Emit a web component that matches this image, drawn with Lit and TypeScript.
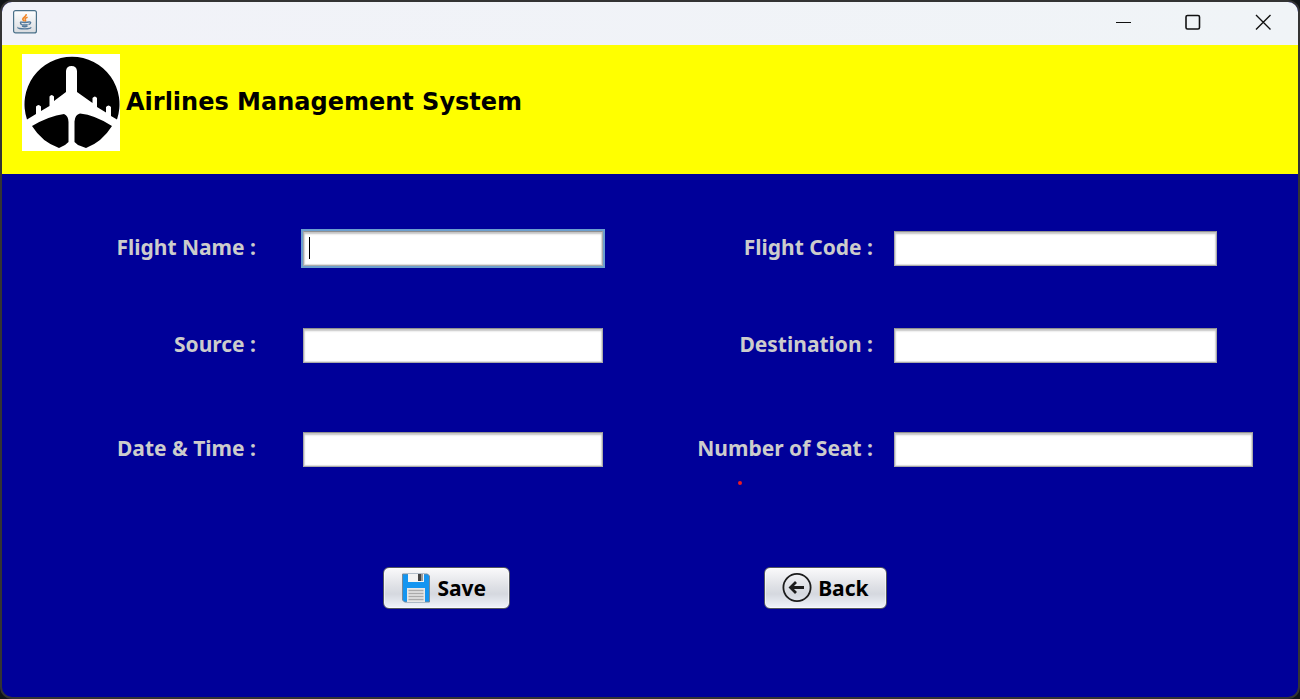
import { LitElement, html, css, svg } from "lit";
import { customElement } from "lit/decorators.js";

const fields = [
  { id: "flight-name", label: "Flight Name :", focused: true },
  { id: "flight-code", label: "Flight Code :", medium: true },
  { id: "source", label: "Source :" },
  { id: "destination", label: "Destination :", medium: true },
  { id: "date-time", label: "Date & Time :" },
  { id: "seats", label: "Number of Seat :", marked: true },
];

const javaIcon = svg`
  <svg width="24" height="24" viewBox="0 0 24 24" fill="none" aria-hidden="true">
    <defs><linearGradient id="tile" x1="0" y1="0" x2="0" y2="1">
      <stop offset="0" stop-color="#fff"/><stop offset="1" stop-color="#d8dbdf"/>
    </linearGradient></defs>
    <rect x=".6" y=".6" width="22.8" height="22.3" rx="2" fill="url(#tile)" stroke="#4b7189" stroke-width="1.2"/>
    <path d="M13.2 4.2c.5 2.3-3.8 3.300-3.400 5.100.2 1 1.400 1.500 1.400 2.200M14.600 7.200c-1.600.5-2.700 1.200-2.400 2.100.3.8.8 1.100 0 2.200" stroke="#f08424" stroke-width="1.600"/>
    <path d="M7.200 11.800c1 .9 7.300.8 8.800.1M7.400 12.300c0 1.300.4 2 1.300 2.300 1.800.4 4.400.4 6 0M16 12c2.200-.6 2.400 1.800-.5 2.500M9 16.200c1.400.5 4 .5 5.500 0M5.300 17.400c-1.400.9 2.500 1.500 6.500 1.500 4 0 6.800-.8 5.700-1.700" stroke="#53789a" stroke-width="1.400"/>
  </svg>`;

const planeLogo = svg`
  <svg width="98" height="97" viewBox="0 0 98 97" role="img" aria-label="Airplane">
    <rect width="98" height="97" fill="#fff"/>
    <path d="M5 65.500A47.500 47.500 0 1 1 95 65.500L89 62V53q-2.500-3-5 0v5.500L75 53v-9q-2-3-4.500 0v5L55 38V17q-.5-5-5.500-5T44 17v21L32 47v-4.500q-2.500-3-4.500 0V52L19 57v-4.500q-2.500-3-5 0V60z" fill="#000"/>
    <path d="M10 72Q27 62 42 60q4.500 2 4.500 8v20L43 91l-6 3Q20 88 10 72zM90 72Q73 61 58 59.500q-5 1-5.500 8V88l3.500 3 8 3Q80 88 90 72z" fill="#000"/>
  </svg>`;

const saveIcon = svg`
  <svg width="30" height="30" viewBox="0 0 30 30" aria-hidden="true">
    <path d="M1.500 1h25l2 2v26H3.500l-2-2z" fill="#1495f0" stroke="#73899c" stroke-width="1"/>
    <path d="M7 1h16v8H7z" fill="#f3f3f3"/>
    <path d="M17 1h5v7h-5z" fill="#444"/><path d="M20 1h2v7h-2z" fill="#999"/>
    <path d="M6 15h18v14H6z" fill="#e7e7e7"/>
    <path d="M7.500 17.500h15M7.500 20.500h15M7.500 23.500h15M7.500 26.500h15" stroke="#aaa" stroke-width="1.600"/>
  </svg>`;

const backIcon = svg`
  <svg width="30" height="30" viewBox="0 0 30 30" fill="none" stroke="#1c1c1c" aria-hidden="true">
    <circle cx="15" cy="14.500" r="13.600" stroke-width="1.800"/>
    <path d="M22 14.500H9M14 9l-5.500 5.500L14 20" stroke-width="2.800"/>
  </svg>`;

@customElement("app-root")
export class AppRoot extends LitElement {
  static styles = css`
    :host {
      display: block;
      box-sizing: border-box;
      min-height: 100vh;
      background: #101418;
      font-family: "Noto Sans", sans-serif;
    }
    .window {
      box-sizing: border-box;
      min-height: 100vh;
      display: flex;
      flex-direction: column;
      border: 2px solid #333;
      border-radius: 12px;
      overflow: hidden;
      background: #000099;
    }
    .titlebar {
      display: flex;
      align-items: center;
      justify-content: space-between;
      height: 43px;
      padding: 0 0 4px 11px;
      box-sizing: border-box;
      background: linear-gradient(90deg, #f1f2f8, #f0f4f7);
    }
    .titlebar svg, .logo svg, button svg { display: block; }
    .controls { display: flex; }
    .control {
      width: 70px;
      height: 39px;
      padding: 0;
      border: 0;
      background: none;
      display: grid;
      place-items: center;
    }
    .banner {
      display: flex;
      align-items: flex-start;
      gap: 6px;
      height: 129px;
      padding: 9px 20px;
      box-sizing: border-box;
      background: #ff0;
    }
    h1 {
      margin: 0;
      font: 700 24px/97px "DejaVu Sans", sans-serif;
      color: #000;
    }
    .form {
      display: grid;
      grid-template-columns: 301fr 300fr 291fr 359fr;
      grid-template-rows: 97px 104px 35px;
      align-items: start;
      padding: 57px 45px 0 0;
    }
    label {
      justify-self: end;
      font-size: 21px;
      font-weight: 700;
      line-height: 33px;
      color: #ccc;
      padding-right: 21px;
      white-space: nowrap;
    }
    .left { padding-right: 47px; }
    .field { position: relative; display: flex; }
    .medium { width: 90%; }
    input {
      box-sizing: border-box;
      width: 100%;
      height: 35px;
      padding: 0 6px;
      border: 1px solid #aaa;
      border-top-color: #909090;
      border-radius: 0;
      outline: none;
      background: #fff;
      box-shadow: inset 0 2px 2px #c4c4c4, inset 0 0 1px 1px #ddd;
      font: inherit;
      font-size: 21px;
    }
    .focused input { outline: 2px solid #6c9fce; }
    .caret {
      position: absolute;
      left: 6px;
      top: 6px;
      width: 1px;
      height: 22px;
      background: #000;
    }
    .dot {
      position: absolute;
      right: 152px;
      top: 49px;
      width: 4px;
      height: 4px;
      border-radius: 50%;
      background: #e81c24;
    }
    .mark { position: relative; }
    .actions {
      display: flex;
      justify-content: center;
      gap: 254px;
      padding: 100px 30px 48px 0;
    }
    .action {
      display: flex;
      align-items: center;
      gap: 6px;
      height: 42px;
      padding: 0 17px;
      border: 1px solid #52565f;
      border-radius: 6px;
      background: linear-gradient(#fafafb, #dfe1e6 45%, #d5d8df 65%, #f0f4fb);
      box-shadow: inset 0 0 0 1px #ffffff80;
      color: #000;
      font: 700 21px/32px "Noto Sans", sans-serif;
    }
    .save { padding-right: 23px; }
  `;

  render() {
    return html`
      <main class="window">
        <div class="titlebar">
          ${javaIcon}
          <div class="controls">
            <button class="control" aria-label="Minimize">
              <svg width="16" height="16" fill="none" stroke="#111"><path d="M1 8.500h15"/></svg>
            </button>
            <button class="control" aria-label="Maximize">
              <svg width="16" height="16" fill="none" stroke="#111" stroke-width="1.600"><rect x="1" y="1.500" width="13.500" height="13.500" rx="1.500"/></svg>
            </button>
            <button class="control" aria-label="Close">
              <svg width="16" height="16" fill="none" stroke="#111" stroke-width="1.400"><path d="M1 1l14.500 14.500M15.500 1L1 15.500"/></svg>
            </button>
          </div>
        </div>
        <header class="banner">
          <div class="logo">${planeLogo}</div>
          <h1>Airlines Management System</h1>
        </header>
        <form @submit=${(e: Event) => e.preventDefault()}>
          <div class="form">
            ${fields.map(
              (f, i) => html`
                <label class="mark ${i % 2 ? "" : "left"}" for=${f.id}>
                  ${f.label}${f.marked ? html`<span class="dot"></span>` : ""}
                </label>
                <div class="field ${f.medium ? "medium" : ""} ${f.focused ? "focused" : ""}">
                  <input id=${f.id} type="text" />
                  ${f.focused ? html`<span class="caret"></span>` : ""}
                </div>
              `
            )}
          </div>
          <div class="actions">
            <button class="action save" type="submit">${saveIcon}Save</button>
            <button class="action" type="button">${backIcon}Back</button>
          </div>
        </form>
      </main>
    `;
  }
}
